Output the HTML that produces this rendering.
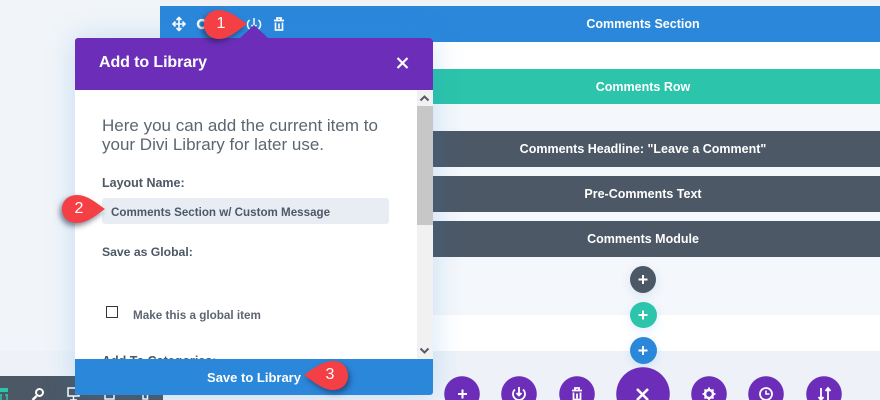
<!DOCTYPE html>
<html><head><meta charset="utf-8">
<style>
html,body{margin:0;padding:0;width:880px;height:400px;overflow:hidden}
#w{position:relative;width:880px;height:400px;overflow:hidden;background:#f1f5f9;font-family:"Liberation Sans",sans-serif}
.a{position:absolute}
.t{position:absolute;white-space:nowrap;font-weight:700;color:#fff;font-size:13px;text-align:center}
.bar{position:absolute;left:160px;width:720px;box-sizing:border-box;padding-left:246px;display:flex;align-items:center;justify-content:center;color:#fff;font-weight:700;font-size:12.500px}
.c{position:absolute;border-radius:50%;box-shadow:0 3px 10px rgba(43,135,218,.15)}
.p{position:absolute;top:376px;height:24px;background:radial-gradient(circle 18px at 18px 18px,#6c2eb9 17.500px,rgba(108,46,185,0) 18px)}
svg{position:absolute;overflow:hidden}
</style></head><body><div id="w">
<div class="a" style="left:160px;top:0;width:720px;height:6px;background:#eff2f7"></div>
<div class="a" style="left:160px;top:42px;width:720px;height:309px;background:#f4f7fb"></div>
<div class="a" style="left:160px;top:42px;width:720px;height:27px;background:#fff"></div>
<div class="a" style="left:160px;top:315px;width:720px;height:36px;background:#fff;box-shadow:0 1px 2px rgba(43,135,218,.08)"></div>
<div class="a" style="left:0;top:351px;width:880px;height:49px;background:#eef2f8"></div>
<div class="bar" style="top:6px;height:36px;padding-bottom:1px;background:#2b87da">Comments Section</div>
<div class="bar" style="top:69px;height:35px;background:#2cc4aa">Comments Row</div>
<div class="bar" style="top:131px;height:36px;background:#4c5866">Comments Headline: "Leave a Comment"</div>
<div class="bar" style="top:176px;height:36px;background:#4c5866">Pre-Comments Text</div>
<div class="bar" style="top:221px;height:36px;padding-bottom:1px;background:#4c5866">Comments Module</div>

<!-- section toolbar icons -->
<svg style="left:0;top:0" width="880" height="400" fill="none" stroke="#fff" stroke-width="2">
<path d="M173 24h12M179 18v12M176.500 20l2.500-2.500 2.500 2.500M176.500 28l2.500 2.500 2.500-2.500M175.500 21.500l-2.500 2.500 2.500 2.500M182.500 21.500l2.500 2.500-2.500 2.500" stroke-width="1.600"/>
<circle cx="202" cy="24" r="4" stroke-width="2.500"/>
<path d="M249.500 20a6 6 0 0 0 0 9M258.500 20a6 6 0 0 1 0 9M254 18v9" stroke-width="1.500"/>
<path d="M251.500 25l2.500 2.500 2.500-2.500" stroke-width="1.500"/>
<path d="M274 20.500h10M277 20v-2h4v2M275.500 22.500v7.500h7v-7.500M279 23.500v5" stroke-width="1.700"/>
</svg>

<!-- add circles -->
<div class="c" style="left:630px;top:266px;width:26px;height:27px;background:#4c5866"></div>
<div class="c" style="left:630px;top:302px;width:27px;height:26px;background:#2cc4aa"></div>
<div class="c" style="left:630px;top:337px;width:27px;height:27px;background:#2b87da"></div>
<div class="p" style="left:444px;width:36px"></div>
<div class="p" style="left:501px;width:36px"></div>
<div class="p" style="left:559px;width:36px"></div>
<div class="a" style="left:616px;top:367px;width:54px;height:33px;background:radial-gradient(circle 27px at 27px 27px,#6c2eb9 26.500px,rgba(108,46,185,0) 27px)"></div>
<div class="p" style="left:691px;width:36px"></div>
<div class="p" style="left:748px;width:36px"></div>
<div class="p" style="left:806px;width:36px"></div>
<svg style="left:0;top:0" width="880" height="400" fill="none" stroke="#fff" stroke-width="2">
<path d="M638.500 279.500h9M643 275v9M638.500 315h9M643 310.500v9M638.500 350.500h9M643 346v9"/>
<path d="M458 394h9M462.500 389.500v9"/>
<path d="M515 389.500a6 6 0 1 0 8 0M519 387v9M516.500 393l2.500 2.500 2.500-2.500" stroke-width="1.800"/>
<path d="M572 390.500h10M575 390v-2h4v2M573.500 392.500v7h7v-7M577 393.500v5" stroke-width="1.800"/>
<path d="M637 389l11 11M648 389l-11 11" stroke-width="2.600"/>
<circle cx="709" cy="394" r="4" stroke-width="2.500"/>
<path d="M709 387.500v2.500M709 398v2.500M702.500 394h2.500M713 394h2.500M704.500 389.500l1.700 1.700M711.800 396.800l1.700 1.700M713.500 389.500l-1.700 1.700M706.200 396.800l-1.700 1.700" stroke-width="1.800"/>
<circle cx="766" cy="394" r="6" stroke-width="1.800"/>
<path d="M766 390.500v3.500h3.500" stroke-width="1.600"/>
<path d="M821 388v12M818.500 397l2.500 3 2.500-3M828 400v-12M825.500 391l2.500-3 2.500 3" stroke-width="1.800"/>
</svg>

<!-- bottom-left page bar -->
<div class="a" style="left:0;top:376px;width:163px;height:24px;background:#4c5866"></div>
<svg style="left:0;top:0" width="880" height="400" fill="none" stroke="#fff" stroke-width="2">
<path d="M0 390h8" stroke="#2cc4aa" stroke-width="4"/>
<path d="M0 395h2M5 395h3M1 395v5M7 395v5" stroke="#2cc4aa" stroke-width="1.500"/>
<circle cx="39.500" cy="392.500" r="3.500"/>
<path d="M36.500 396l-4 4" stroke-width="2.500"/>
<path d="M68 388h11v8h-11zM73.500 396v4M70 400h7" stroke-width="1.500"/>
<path d="M105 395v4h9v-4M143 395v4h4.500v-4" stroke-width="1.500"/>
</svg>

<!-- modal -->
<div class="a" style="left:75px;top:38px;width:358px;height:357px;background:#fff;border-radius:3px;box-shadow:0 0 30px rgba(43,135,218,.22);overflow:hidden">
  <div class="a" style="left:0;top:0;width:358px;height:52px;background:#6c2eb9"></div>
  <div class="t" style="left:24px;top:15px;font-size:16px;letter-spacing:-.1px;line-height:20px">Add to Library</div>
  <div class="a" style="left:342px;top:52px;width:16px;height:269px;background:#f1f1f1"></div>
  <div class="a" style="left:342px;top:68px;width:16px;height:119px;background:#c7c7c7"></div>
  <div class="a" style="left:27px;top:78px;color:#5c6672;font-size:17px;line-height:19px;white-space:nowrap">Here you can add the current item to<br>your Divi Library for later use.</div>
  <div class="a" style="left:27px;top:138px;color:#4c5866;font-size:12.500px;font-weight:700;line-height:15px;white-space:nowrap">Layout Name:</div>
  <div class="a" style="left:27px;top:160px;width:287px;height:26px;border-radius:3px;background:#e8edf4;color:#4c5866;font-size:11.600px;font-weight:700;line-height:29px;text-indent:9px;white-space:nowrap;overflow:hidden">Comments Section w/ Custom Message</div>
  <div class="a" style="left:27px;top:207px;color:#4c5866;font-size:12.200px;font-weight:700;line-height:15px;white-space:nowrap">Save as Global:</div>
  <div class="a" style="left:31px;top:268px;width:10px;height:10px;border:1.500px solid #32373c;background:#fff"></div>
  <div class="a" style="left:58px;top:270px;color:#5c6672;font-size:11.700px;font-weight:700;line-height:15px;white-space:nowrap">Make this a global item</div>
  <div class="a" style="left:27px;top:316px;color:#4c5866;font-size:12.500px;font-weight:700;line-height:15px;white-space:nowrap">Add To Categories:</div>
  <div class="a" style="left:0;top:321px;width:358px;height:36px;background:#2b87da;color:#fff;font-size:13px;font-weight:700;line-height:37px;text-align:center">Save to Library</div>
</div>
<svg style="left:0;top:0" width="880" height="400" fill="none">
<path d="M240 38L254 25L268 38z" fill="#6c2eb9"/>
<path d="M397.500 58l10 10M407.500 58l-10 10" stroke="#fff" stroke-width="2.200"/>
<path d="M420.500 100.500l4-4 4 4" stroke="#555b66" stroke-width="2"/>
<path d="M420.500 348.500l4 4 4-4" stroke="#555b66" stroke-width="2"/>
</svg>

<!-- callout markers -->
<svg style="left:0;top:0;filter:drop-shadow(-2px 3px 3px rgba(20,30,60,.55))" width="880" height="400">
<path d="M219 10c-10 0-15 7-15 14.500s5 14.500 15 14.500c10 0 18-8 28-15c-10-7-18-14-28-14z" fill="#f44045"/>
</svg>
<svg style="left:0;top:0;filter:drop-shadow(-2px 3px 3px rgba(20,30,60,.55))" width="880" height="400">
<path d="M77 195c-10 0-15 7-15 14s5 14 15 14c10 0 18-7 28-14c-10-7-18-14-28-14z" fill="#f44045"/>
</svg>
<svg style="left:0;top:0;filter:drop-shadow(2px 3px 3px rgba(20,30,60,.55))" width="880" height="400">
<path d="M333 361c10 0 15 7 15 14.500s-5 14.500-15 14.500c-10 0-19-8-29-15c10-7 19-14 29-14z" fill="#f44045"/>
</svg>
<div class="a" style="left:213px;top:14px;width:16px;text-align:center;color:#fff;font-size:16px;line-height:20px">1</div>
<div class="a" style="left:71px;top:199px;width:16px;text-align:center;color:#fff;font-size:16px;line-height:20px">2</div>
<div class="a" style="left:322px;top:365px;width:16px;text-align:center;color:#fff;font-size:16px;line-height:20px">3</div>
</div></body></html>
